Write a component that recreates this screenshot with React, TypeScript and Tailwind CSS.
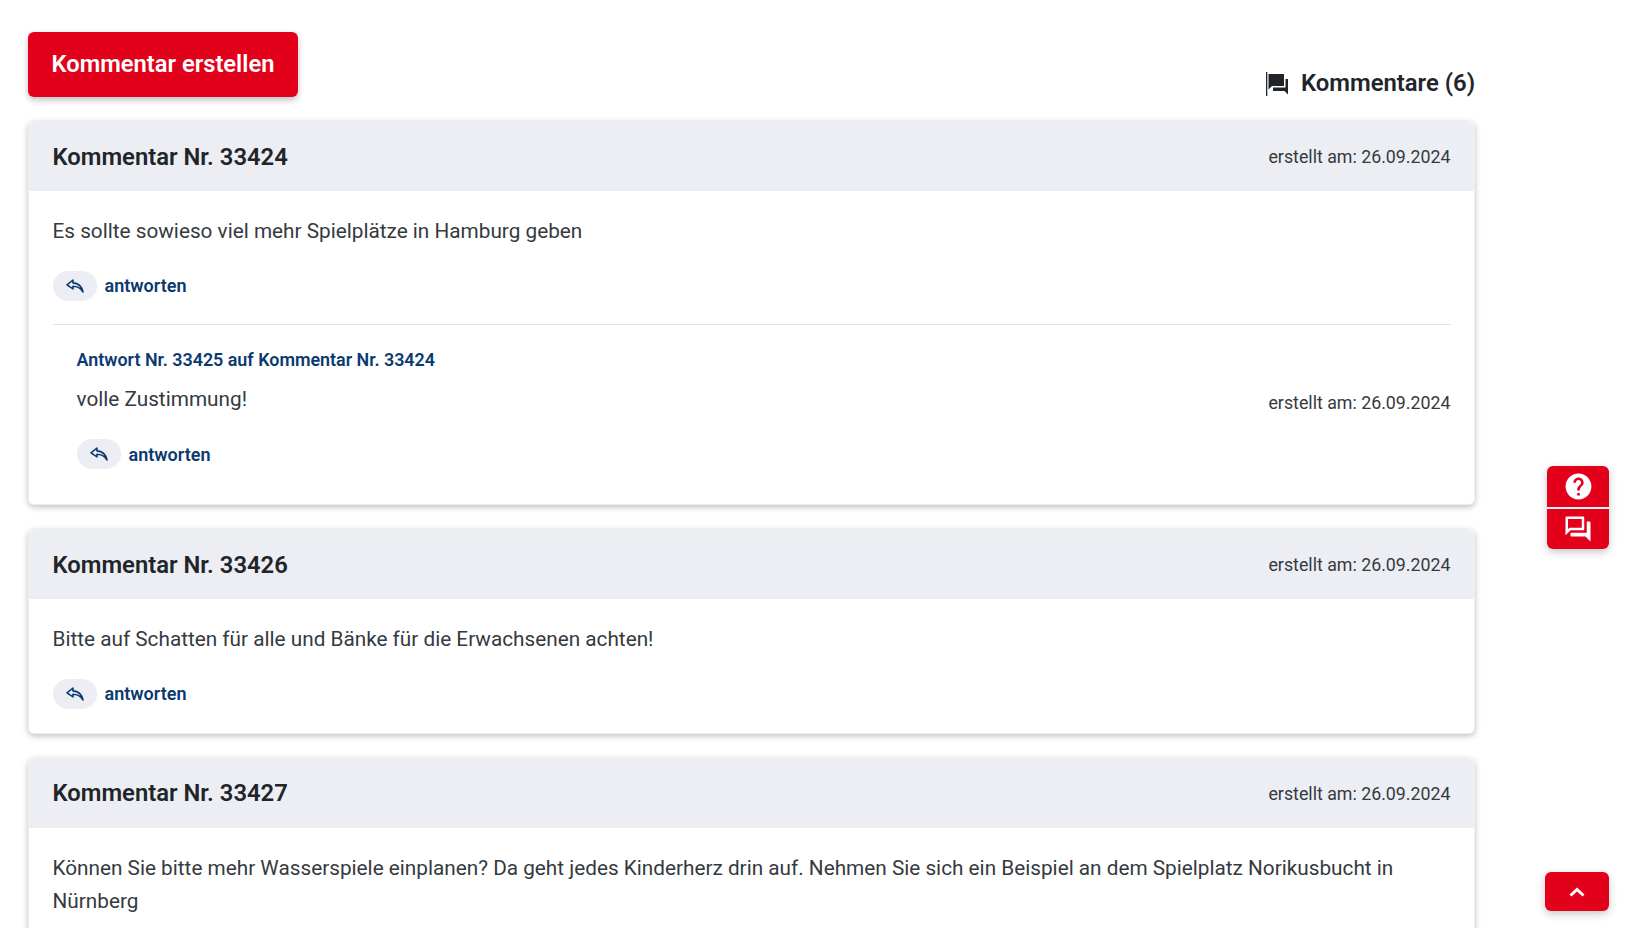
import React from "react";

const Reply = () => (
  <svg width="18" height="14" viewBox="0 0 18 14" fill="none" stroke="#0b3a70" strokeWidth="1.6" strokeLinejoin="round" strokeLinecap="round">
    <path d="M7 1 L1 5.800 L7 9.800 V7.300 C11 7.300 14.500 9 17 13 C16 8 12.500 4.300 7 3.900 Z" />
  </svg>
);

const Antworten = () => (
  <div className="flex items-center gap-2">
    <span className="flex h-[30px] w-11 items-center justify-center rounded-full bg-[#eceef3]"><Reply /></span>
    <span className="text-[18px] font-semibold text-[#0b3a70]">antworten</span>
  </div>
);

const Card = ({ n, text, children, noReply }: { n: string; text: string; children?: React.ReactNode; noReply?: boolean }) => (
  <section className="mb-6 rounded-md border border-[#eceef0] bg-white shadow-[0_2px_6px_rgba(0,0,0,0.25)]">
    <header className="flex h-[69px] items-center justify-between rounded-t-md bg-[#eceef3] px-[23.5px] pt-[2px]">
      <h2 className="text-[23.8px] font-semibold text-[#212529]">Kommentar Nr. {n}</h2>
      <span className="text-[17.8px] text-[#343a40]">erstellt am: 26.09.2024</span>
    </header>
    <div className="px-[23.5px] pt-6 pb-6">
      <p className="text-[20.75px] leading-[33.5px] text-[#343a40]">{text}</p>
      {!noReply && <div className="mt-[22px]"><Antworten /></div>}
      {children}
    </div>
  </section>
);

export default function App() {
  return (
    <div className="relative h-[928px] overflow-hidden bg-white font-['Roboto',sans-serif]">
      <main className="ml-7 w-[1447px] pt-8">
        <div className="mb-6 flex h-[65px] items-start justify-between">
          <button className="h-[65px] w-[270px] rounded-md bg-[#e2001a] text-[23.7px] font-semibold text-white shadow-[0_3px_6px_rgba(0,0,0,0.25)]">Kommentar erstellen</button>
          <div className="flex items-center gap-3 pt-[34px] text-[23.85px] font-semibold text-[#212529]">
            <svg width="24" height="26" viewBox="0 0 24 26" fill="#212529">
              <path d="M1 1h1.300v24H1z" />
              <path d="M3.500 3h15.500v12H7l-3.500 3.500z" />
              <path d="M20.500 8H23v15.500L19.500 20H8v-3.500h12.500z" />
            </svg>
            <span>Kommentare (6)</span>
          </div>
        </div>
        <Card n="33424" text="Es sollte sowieso viel mehr Spielplätze in Hamburg geben">
          <div className="mt-[23px] border-t border-[#dee2e6] pt-[22px] pb-[11px] pl-6">
            <div className="text-[17.9px] leading-[26px] font-semibold text-[#0b3a70]">Antwort Nr. 33425 auf Kommentar Nr. 33424</div>
            <div className="mt-[10px] flex items-end justify-between">
              <p className="text-[20.75px] leading-[33.5px] text-[#343a40]">volle Zustimmung!</p>
              <span className="text-[17.8px] leading-[26px] text-[#343a40]">erstellt am: 26.09.2024</span>
            </div>
            <div className="mt-[23px]"><Antworten /></div>
          </div>
        </Card>
        <Card n="33426" text="Bitte auf Schatten für alle und Bänke für die Erwachsenen achten!" />
        <Card noReply n="33427" text="Können Sie bitte mehr Wasserspiele einplanen? Da geht jedes Kinderherz drin auf. Nehmen Sie sich ein Beispiel an dem Spielplatz Norikusbucht in Nürnberg" />
      </main>
      <div className="absolute left-[1547px] top-[466px] flex h-[83px] w-[62px] flex-col overflow-hidden rounded-md shadow-[0_3px_8px_rgba(0,0,0,0.22)]">
        <div className="flex h-[41px] items-center justify-center bg-[#e2001a]">
          <svg width="31" height="31" viewBox="0 0 24 24" fill="#fff"><path d="M12 2C6.48 2 2 6.48 2 12s4.480 10 10 10 10-4.480 10-10S17.520 2 12 2zm1 17h-2v-2h2v2zm2.070-7.750l-.9.920C13.450 12.900 13 13.500 13 15h-2v-.5c0-1.100.450-2.100 1.170-2.830l1.240-1.260c.370-.360.590-.860.590-1.410 0-1.100-.9-2-2-2s-2 .9-2 2H8c0-2.210 1.790-4 4-4s4 1.790 4 4c0 .880-.360 1.680-.930 2.250z" /></svg>
        </div>
        <div className="h-[1.500px] bg-[#f3f3f3]" />
        <div className="flex flex-1 items-center justify-center bg-[#e2001a]">
          <svg width="30" height="30" viewBox="0 0 24 24" fill="#fff"><path d="M15 4v7H5.170L4 12.170V4h11m1-2H3c-.55 0-1 .45-1 1v14l4-4h10c.55 0 1-.45 1-1V3c0-.55-.45-1-1-1zm5 4h-2v9H6v2c0 .55.45 1 1 1h11l4 4V7c0-.55-.45-1-1-1z" /></svg>
        </div>
      </div>
      <button className="absolute left-[1545px] top-[872px] flex h-[39px] w-[64px] items-center justify-center rounded-md bg-[#e2001a] shadow-[0_3px_8px_rgba(0,0,0,0.22)]">
        <svg width="16" height="10" viewBox="0 0 16 10" fill="none" stroke="#fff" strokeWidth="3"><path d="M1.500 8.500 8 2.500l6.500 6" /></svg>
      </button>
    </div>
  );
}
